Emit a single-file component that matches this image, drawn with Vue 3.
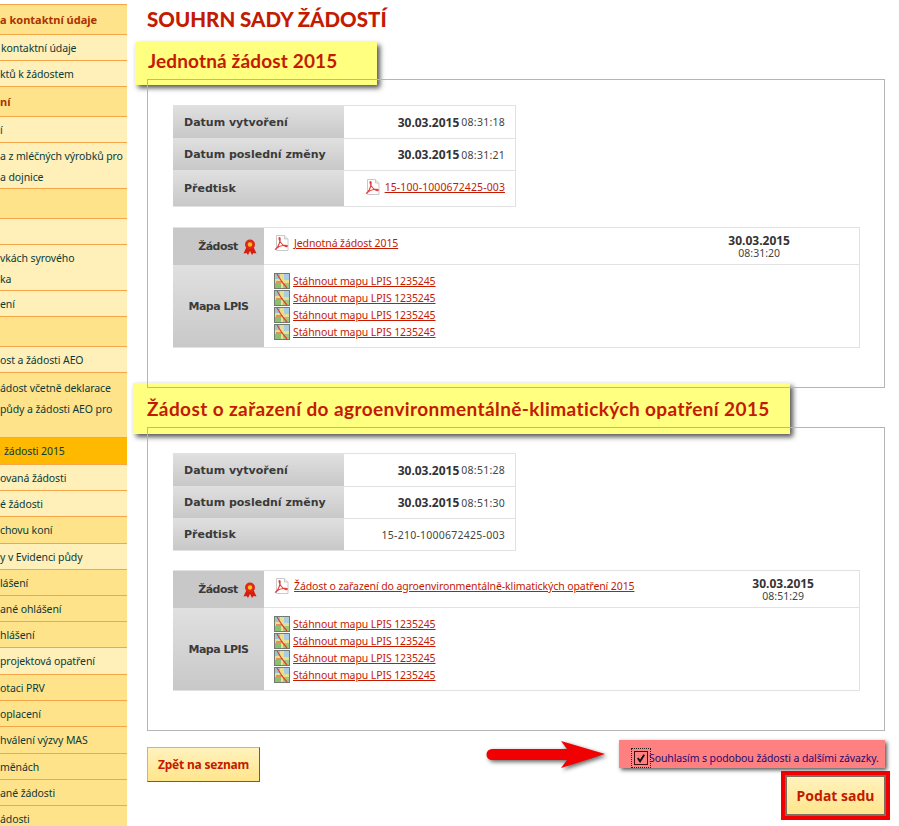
<script setup>
// sidebar rows: text is what is visible, the menu is scrolled off to the left
const menu = [
  { h: 30, kind: 'head', lines: ['a kontaktní údaje'], x: 0 },
  { h: 26, kind: 'light', lines: ['kontaktní údaje'], x: 1 },
  { h: 26, kind: 'light', lines: ['ktů k žádostem'], x: 0 },
  { h: 30, kind: 'head', lines: ['ní'], x: 0 },
  { h: 26, kind: 'light', lines: ['í'], x: 0 },
  { h: 46, kind: 'light', lines: ['a z mléčných výrobků pro', 'a dojnice'], x: 0 },
  { h: 30, kind: 'head', lines: [''], x: 0 },
  { h: 26, kind: 'light', lines: [''], x: 0 },
  { h: 46, kind: 'light', lines: ['vkách syrového', 'ka'], x: 0 },
  { h: 26, kind: 'light', lines: ['ení'], x: 0 },
  { h: 30, kind: 'head', lines: [''], x: 0 },
  { h: 26, kind: 'light', lines: ['ost a žádosti AEO'], x: 0 },
  { h: 65, kind: 'dark', lines: ['ádost včetně deklarace', 'půdy a žádosti AEO pro', ''], x: 0, top: 2 },
  { h: 27, kind: 'active', lines: ['žádosti 2015'], x: 4 },
  { h: 26, kind: 'light', lines: ['ovaná žádosti'], x: 0 },
  { h: 26, kind: 'light', lines: ['é žádosti'], x: 0 },
  { h: 27, kind: 'dark', lines: ['chovu koní'], x: 0 },
  { h: 26, kind: 'light', lines: ['y v Evidenci půdy'], x: 0 },
  { h: 26, kind: 'dark', lines: ['lášení'], x: 0 },
  { h: 26, kind: 'dark', lines: ['ané ohlášení'], x: 0 },
  { h: 26, kind: 'dark', lines: ['hlášení'], x: 0 },
  { h: 27, kind: 'light', lines: ['projektová opatření'], x: 0 },
  { h: 26, kind: 'dark', lines: ['otaci PRV'], x: 0 },
  { h: 26, kind: 'dark', lines: ['oplacení'], x: 0 },
  { h: 27, kind: 'dark', lines: ['hválení výzvy MAS'], x: 0 },
  { h: 26, kind: 'dark', lines: ['měnách'], x: 0 },
  { h: 26, kind: 'dark', lines: ['ané žádosti'], x: 0 },
  { h: 26, kind: 'dark', lines: ['ádosti'], x: 0 },
]

const sections = [
  {
    title: 'Jednotná žádost 2015',
    created: '08:31:18',
    createdDate: '30.03.2015',
    changed: '08:31:21',
    number: '15-100-1000672425-003',
    numberLink: true,
    request: 'Jednotná žádost 2015',
    time: '08:31:20',
  },
  {
    title: 'Žádost o zařazení do agroenvironmentálně-klimatických opatření 2015',
    created: '08:51:28',
    createdDate: '30.03.2015',
    changed: '08:51:30',
    number: '15-210-1000672425-003',
    numberLink: false,
    request: 'Žádost o zařazení do agroenvironmentálně-klimatických opatření 2015',
    time: '08:51:29',
  },
]
</script>

<template>
  <div class="page">
    <nav class="menu">
      <div
        v-for="(row, i) in menu"
        :key="i"
        class="menu-row"
        :class="row.kind"
        :style="{ height: row.h + 'px', paddingLeft: row.x + 'px', paddingTop: (row.top || 0) + 'px' }"
      >
        <span v-for="(line, j) in row.lines" :key="j" class="menu-line">{{ line }}</span>
      </div>
    </nav>

    <main class="content">
      <h1>SOUHRN SADY ŽÁDOSTÍ</h1>

      <section v-for="(s, n) in sections" :key="n" class="section" :class="'section-' + n">
        <h2 class="tag">{{ s.title }}</h2>
        <div class="panel">
          <div class="info">
            <div class="label">Datum vytvoření</div>
            <div class="value"><b>{{ s.createdDate }}</b> {{ s.created }}</div>
            <div class="label">Datum poslední změny</div>
            <div class="value"><b>{{ s.createdDate }}</b> {{ s.changed }}</div>
            <div class="label">Předtisk</div>
            <div class="value" :class="{ tall: s.numberLink }">
              <template v-if="s.numberLink">
                <svg class="pdf" viewBox="0 0 16 16" width="16" height="16">
                  <path d="M2.500.5h8l3.500 3.500v11.500h-11.500z" fill="#fff" stroke="#c9c9c9" />
                  <path d="M10.500.5v3.500h3.500" fill="#eee" stroke="#c9c9c9" />
                  <path d="M1 14.500c2-1 4-4.500 5-8.500.300-2 .200-3.500-.500-3.500-1 0-.500 3 2 6 1.500 2 4 3.500 5.500 3 1-.500-.500-1.500-3-1.200-3 .300-6 1.500-8 3.500z" fill="none" stroke="#e0403a" stroke-width="1.100" />
                </svg>
                <a href="#">{{ s.number }}</a>
              </template>
              <template v-else>{{ s.number }}</template>
            </div>
          </div>

          <div class="files">
            <div class="label flat">
              Žádost
              <svg class="medal" viewBox="0 0 14 16" width="14" height="16">
                <path d="M3.500 8 .5 14.500l3-.5 1.500 2 2-4 2 4 1.500-2 3 .5L10.500 8z" fill="#d81c10" />
                <circle cx="7" cy="5.500" r="5" fill="#e0281a" />
                <circle cx="7" cy="5.500" r="2.200" fill="#f6c21c" />
              </svg>
            </div>
            <div class="request">
              <div class="request-name">
                <svg class="pdf" viewBox="0 0 16 16" width="16" height="16">
                  <path d="M2.500.5h8l3.500 3.500v11.500h-11.500z" fill="#fff" stroke="#c9c9c9" />
                  <path d="M10.500.5v3.500h3.500" fill="#eee" stroke="#c9c9c9" />
                  <path d="M1 14.500c2-1 4-4.500 5-8.500.300-2 .200-3.500-.500-3.500-1 0-.500 3 2 6 1.500 2 4 3.500 5.500 3 1-.500-.500-1.500-3-1.200-3 .300-6 1.500-8 3.500z" fill="none" stroke="#e0403a" stroke-width="1.100" />
                </svg>
                <a href="#">{{ s.request }}</a>
              </div>
              <div class="stamp"><b>{{ s.createdDate }}</b><span>{{ s.time }}</span></div>
            </div>
            <div class="label map-label">Mapa LPIS</div>
            <div class="maps">
              <div v-for="m in 4" :key="m" class="map-row">
                <svg class="map" viewBox="0 0 16 16" width="16" height="16">
                  <rect x=".5" y=".5" width="15" height="15" fill="#e8e090" stroke="#707a70" />
                  <rect x="1" y="1" width="5" height="5" fill="#9cc4d8" />
                  <rect x="10" y="1" width="5" height="6" fill="#a8cce0" />
                  <rect x="1" y="10" width="6" height="5" fill="#8cc070" />
                  <rect x="9" y="10" width="6" height="5" fill="#a0c880" />
                  <path d="M3 1 8 9l5 6M2 9h7" fill="none" stroke="#e0402a" stroke-width="1.200" />
                </svg>
                <a href="#">Stáhnout mapu LPIS 1235245</a>
              </div>
            </div>
          </div>
        </div>
      </section>

      <div class="actions">
        <button class="btn back">Zpět na seznam</button>
        <div class="submit-side">
          <div class="agree-line">
            <svg class="arrow" viewBox="0 0 124 30" width="124" height="30">
              <path d="M7 9H82L76 1 120 14 76 28 82 20H7a5.500 5.500 0 0 1 0-11z" fill="#f00000" />
            </svg>
            <label class="agree">
              <span class="check">
                <svg viewBox="0 0 13 13" width="12" height="12"><path d="M3 6.500 5.500 10 10 3" fill="none" stroke="#111" stroke-width="2" /></svg>
              </span>
              Souhlasím s podobou žádosti a dalšími závazky.
            </label>
          </div>
          <div class="submit-ring"><button class="btn submit">Podat sadu</button></div>
        </div>
      </div>
    </main>
  </div>
</template>

<style>
html, body { margin: 0; height: 826px; overflow: hidden; background: #fff; }
</style>

<style scoped>
.page {
  display: flex;
  width: 899px;
  height: 826px;
  overflow: hidden;
  font-family: "Noto Sans", Verdana, sans-serif;
  font-size: 10.500px;
  color: #333;
}

.menu {
  width: 127px;
  flex: none;
  padding-top: 4px;
  overflow: hidden;
  color: #0c3a3a;
}
.menu-row {
  box-sizing: border-box;
  border-top: 1px solid #f5a646;
  display: flex;
  flex-direction: column;
  justify-content: flex-start;
  white-space: nowrap;
  overflow: hidden;
}
.menu-line {
  height: 20px;
  line-height: 20px;
  margin-top: 3px;
  flex: none;
  letter-spacing: -0.1px;
}
.menu-line + .menu-line { margin-top: 1px; }
.light { background: #ffefb8; }
.dark { background: #ffe38a; }
.head { background: #ffe38a; color: #a83200; font-weight: bold; font-size: 11px; }
.head .menu-line { margin-top: 5px; letter-spacing: 0; }
.active { background: #ffb900; }

.content {
  flex: 1;
  min-width: 0;
  padding: 0 14px 0 20px;
}

h1 {
  margin: 5px 0 0;
  height: 37px;
  font-family: Lato, "Liberation Sans", sans-serif;
  font-size: 20.500px;
  line-height: 28px;
  font-weight: 900;
  color: #c41a00;
}

.tag {
  position: relative;
  z-index: 1;
  box-sizing: border-box;
  width: 242px;
  margin: 0 0 -6px -12px;
  height: 43px;
  padding: 0 0 0 13px;
  background: #ffff80;
  box-shadow: 3px 3px 5px #555;
  font-family: Lato, "Liberation Sans", sans-serif;
  font-size: 19px;
  font-weight: 700;
  letter-spacing: 0.15px;
  line-height: 38px;
  color: #c41a00;
}
.section-1 { margin-top: -5px; }
.section-1 .tag {
  width: 657px;
  margin: 0 0 -7px -14px;
  height: 51px;
  padding: 0 0 0 14px;
  letter-spacing: 0.4px;
  line-height: 51px;
}

/* border of the panel runs over the yellow tag */
.panel {
  position: relative;
  z-index: 2;
  box-sizing: border-box;
  width: 738px;
  height: 309px;
  padding: 25px 25px 0;
  border: 1px solid #b5b5b5;
}
.section-1 .panel { height: 304px; }

.info {
  display: grid;
  grid-template-columns: 171px 171px;
  grid-template-rows: 32px 32px 36px;
  width: 343px;
  box-sizing: border-box;
  border: 1px solid #e2e2e2;
  border-left-width: 0;
}
.section-1 .info { grid-template-rows: 32px 32px 32px; }

.label {
  display: flex;
  align-items: center;
  padding-left: 11px;
  font-family: "DejaVu Sans", Verdana, sans-serif;
  font-size: 11px;
  font-weight: bold;
  color: #3a3a3a;
  background: linear-gradient(#e0e0e0, #c8c8c8);
}
.value {
  display: flex;
  align-items: center;
  justify-content: flex-end;
  gap: 2px;
  padding-right: 10px;
  border-top: 1px solid #e2e2e2;
  color: #444;
  letter-spacing: 0.25px;
}
.value:nth-child(2) { border-top: 0; }
.value b, .stamp b { color: #333; font-size: 12px; letter-spacing: 0; }
.value.tall { padding-bottom: 4px; box-sizing: border-box; gap: 4px; }

a { color: #c41a00; text-decoration: underline; letter-spacing: -0.1px; }
.value a { letter-spacing: 0.1px; }

.files {
  display: grid;
  grid-template-columns: 91px 1fr;
  grid-template-rows: 37px 82px;
  width: 687px;
  margin-top: 20px;
  box-sizing: border-box;
  border: 1px solid #e2e2e2;
  border-left-width: 0;
}
.section-1 .files { margin-top: 19px; }
.files .label {
  justify-content: center;
  padding-left: 0;
  letter-spacing: -0.5px;
}
.files .flat {
  background: #c8c8c8;
  gap: 5px;
  padding-left: 18px;
}
.medal { flex: none; }
.request {
  display: flex;
  justify-content: space-between;
  padding: 7px 69px 0 10px;
  border-bottom: 1px solid #e2e2e2;
}
.section-1 .request { padding-right: 45px; }
.request-name {
  display: flex;
  align-items: flex-start;
  gap: 4px;
}
.request-name a { margin-top: 1px; }
.stamp {
  display: flex;
  flex-direction: column;
  align-items: center;
  line-height: 12px;
  color: #444;
}
.maps {
  padding: 7px 0 0 10px;
}
.map-row {
  display: flex;
  align-items: center;
  gap: 3px;
  height: 17px;
}
.map { flex: none; }

.actions {
  display: flex;
  justify-content: space-between;
  margin-top: 9px;
}
.btn {
  font-family: "Noto Sans", Verdana, sans-serif;
  font-weight: bold;
  color: #c41a00;
  background: linear-gradient(#fff2bd, #ffe58c);
  cursor: pointer;
}
.back {
  margin-top: 7px;
  width: 113px;
  height: 35px;
  padding: 0;
  font-size: 12px;
  letter-spacing: -0.2px;
  border: 1px solid;
  border-color: #e0b060 #7a5c28 #7a5c28 #e0b060;
}
.submit-side {
  display: flex;
  flex-direction: column;
  align-items: flex-end;
}
.agree-line {
  display: flex;
  align-items: flex-start;
  gap: 10px;
}
.arrow {
  filter: drop-shadow(2px 2px 2px #666);
}
.agree {
  box-sizing: border-box;
  width: 266px;
  height: 28px;
  display: flex;
  align-items: center;
  padding: 7px 0 0 15px;
  background: #ff8080;
  box-shadow: 2px 2px 4px #555;
  letter-spacing: -0.1px;
  color: #2a0a6a;
  white-space: nowrap;
}
.check {
  box-sizing: border-box;
  flex: none;
  width: 14px;
  height: 14px;
  margin-right: 1px;
  border: 1px solid #401010;
  outline: 1px dotted #222;
  outline-offset: 2px;
  display: flex;
}
.submit-ring {
  box-sizing: border-box;
  width: 109px;
  height: 49px;
  margin: 1px -5px 0 0;
  border: 4px solid #f00000;
  display: flex;
}
.submit {
  flex: 1;
  font-size: 14px;
  padding: 0;
  border: 2px solid #7a7060;
}
</style>
